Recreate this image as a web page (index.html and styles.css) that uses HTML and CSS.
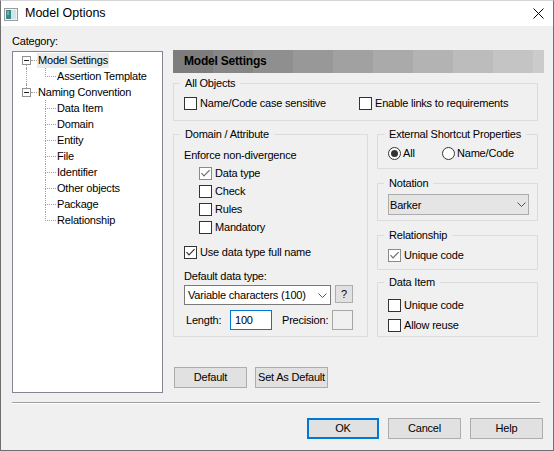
FILE: index.html
```html
<!DOCTYPE html>
<html>
<head>
<meta charset="utf-8">
<title>Model Options</title>
<link rel="stylesheet" href="styles.css">
</head>
<body>
<div class="window">
  <div class="titlebar">
    <svg class="app-icon" width="14" height="13" viewBox="0 0 14 13">
      <rect x="0.5" y="0.5" width="13" height="12" fill="#f2f2f2" stroke="#9c9c9c"/>
      <rect x="2" y="2" width="5" height="9" fill="#3f8585"/>
      <rect x="3" y="3" width="2" height="4" fill="#6fb0a8"/>
      <rect x="7" y="2" width="5" height="9" fill="#cfe3ea"/>
    </svg>
    <span class="title">Model Options</span>
    <svg class="close" width="11" height="11" viewBox="0 0 11 11">
      <path d="M0.5 0.5 L10.5 10.5 M10.5 0.5 L0.5 10.5" stroke="#000" stroke-width="1" fill="none"/>
    </svg>
  </div>

  <div class="client">
    <div class="main">
      <div class="left">
        <div class="cat-label">Category:</div>
        <div class="tree">
          <div class="trow">
            <div class="gutter">
              <div class="exp-col">
                <div class="stub top"></div>
                <div class="exp"><i></i></div>
                <div class="stub bot line"></div>
              </div>
              <div class="hdots"></div>
            </div>
            <span class="tlabel sel">Model Settings</span>
          </div>
          <div class="trow">
            <div class="gutter"><div class="vline"></div></div>
            <div class="branch"><div class="b-top"></div><div class="b-bot"></div></div>
            <span class="tlabel">Assertion Template</span>
          </div>
          <div class="trow">
            <div class="gutter">
              <div class="exp-col">
                <div class="stub top line"></div>
                <div class="exp"><i></i></div>
                <div class="stub bot"></div>
              </div>
              <div class="hdots"></div>
            </div>
            <span class="tlabel">Naming Convention</span>
          </div>
          <div class="trow">
            <div class="gutter"></div>
            <div class="branch"><div class="b-top"></div><div class="b-bot line"></div></div>
            <span class="tlabel">Data Item</span>
          </div>
          <div class="trow">
            <div class="gutter"></div>
            <div class="branch"><div class="b-top"></div><div class="b-bot line"></div></div>
            <span class="tlabel">Domain</span>
          </div>
          <div class="trow">
            <div class="gutter"></div>
            <div class="branch"><div class="b-top"></div><div class="b-bot line"></div></div>
            <span class="tlabel">Entity</span>
          </div>
          <div class="trow">
            <div class="gutter"></div>
            <div class="branch"><div class="b-top"></div><div class="b-bot line"></div></div>
            <span class="tlabel">File</span>
          </div>
          <div class="trow">
            <div class="gutter"></div>
            <div class="branch"><div class="b-top"></div><div class="b-bot line"></div></div>
            <span class="tlabel">Identifier</span>
          </div>
          <div class="trow">
            <div class="gutter"></div>
            <div class="branch"><div class="b-top"></div><div class="b-bot line"></div></div>
            <span class="tlabel">Other objects</span>
          </div>
          <div class="trow">
            <div class="gutter"></div>
            <div class="branch"><div class="b-top"></div><div class="b-bot line"></div></div>
            <span class="tlabel">Package</span>
          </div>
          <div class="trow">
            <div class="gutter"></div>
            <div class="branch"><div class="b-top"></div><div class="b-bot"></div></div>
            <span class="tlabel">Relationship</span>
          </div>
        </div>
      </div>

      <div class="right">
        <div class="page-header">Model Settings</div>

        <div class="group g-all">
          <div class="legend">All Objects</div>
          <div class="inline-row">
            <div class="check w175"><span class="box"></span><span>Name/Code case sensitive</span></div>
            <div class="check"><span class="box"></span><span>Enable links to requirements</span></div>
          </div>
        </div>

        <div class="cols">
          <div class="group g-domain">
            <div class="legend">Domain / Attribute</div>
            <div class="plain enforce">Enforce non-divergence</div>
            <div class="check sub first">
              <span class="box dim"><svg width="11" height="11" viewBox="0 0 11 11"><path d="M1.5 5.2 L4 7.8 L9.6 2.2" fill="none" stroke="#6e6e6e" stroke-width="1.2"/></svg></span><span>Data type</span>
            </div>
            <div class="check sub"><span class="box"></span><span>Check</span></div>
            <div class="check sub"><span class="box"></span><span>Rules</span></div>
            <div class="check sub"><span class="box"></span><span>Mandatory</span></div>
            <div class="check fullname">
              <span class="box"><svg width="11" height="11" viewBox="0 0 11 11"><path d="M1.5 5.2 L4 7.8 L9.6 2.2" fill="none" stroke="#333" stroke-width="1.2"/></svg></span><span>Use data type full name</span>
            </div>
            <div class="plain ddt">Default data type:</div>
            <div class="combo-row">
              <div class="combo">
                <span>Variable characters (100)</span>
                <svg width="9" height="5" viewBox="0 0 9 5"><path d="M0.5 0.5 L4.5 4.5 L8.5 0.5" fill="none" stroke="#555" stroke-width="1"/></svg>
              </div>
              <div class="qbtn">?</div>
            </div>
            <div class="len-row">
              <span class="lbl len">Length:</span>
              <div class="edit focus">100</div>
              <span class="lbl prec">Precision:</span>
              <div class="edit dis"></div>
            </div>
          </div>

          <div class="stack">
            <div class="group g-ext">
              <div class="legend">External Shortcut Properties</div>
              <div class="inline-row radios">
                <div class="radio w54"><span class="circle on"><i></i></span><span>All</span></div>
                <div class="radio"><span class="circle"></span><span>Name/Code</span></div>
              </div>
            </div>
            <div class="group g-notation">
              <div class="legend">Notation</div>
              <div class="combo ro">
                <span>Barker</span>
                <svg width="9" height="5" viewBox="0 0 9 5"><path d="M0.5 0.5 L4.5 4.5 L8.5 0.5" fill="none" stroke="#555" stroke-width="1"/></svg>
              </div>
            </div>
            <div class="group g-rel">
              <div class="legend">Relationship</div>
              <div class="check inner r1">
                <span class="box dim"><svg width="11" height="11" viewBox="0 0 11 11"><path d="M1.5 5.2 L4 7.8 L9.6 2.2" fill="none" stroke="#6e6e6e" stroke-width="1.2"/></svg></span><span>Unique code</span>
              </div>
            </div>
            <div class="group g-di">
              <div class="legend">Data Item</div>
              <div class="check inner d1"><span class="box"></span><span>Unique code</span></div>
              <div class="check inner d2"><span class="box"></span><span>Allow reuse</span></div>
            </div>
          </div>
        </div>

        <div class="actions">
          <button class="btn">Default</button>
          <button class="btn">Set As Default</button>
        </div>
      </div>
    </div>

    <div class="separator"></div>

    <div class="footer">
      <button class="btn primary">OK</button>
      <button class="btn">Cancel</button>
      <button class="btn">Help</button>
    </div>
  </div>
</div>
</body>
</html>
```

FILE: styles.css
```css
* { box-sizing: border-box; }
html, body { margin: 0; padding: 0; }
body {
  font-family: "Liberation Sans", Arial, sans-serif;
  font-size: 11px;
  letter-spacing: -0.2px;
  color: #000;
  background: #f0f0f0;
}

.window {
  width: 554px;
  height: 451px;
  border: 1px solid #707070;
  border-top-color: #d4d4d4;
  background: #f0f0f0;
  display: flex;
  flex-direction: column;
  overflow: hidden;
}

/* title bar */
.titlebar {
  height: 25px;
  flex-shrink: 0;
  background: #fff;
  display: flex;
  align-items: center;
}
.app-icon { margin-left: 3px; margin-top: 1px; flex-shrink: 0; }
.title { margin-left: 7px; font-size: 12.5px; line-height: 25px; letter-spacing: 0; }
.close { margin-left: auto; margin-right: 9px; }

/* client area */
.client {
  flex: 1;
  padding-top: 9px;
  display: flex;
  flex-direction: column;
}
.main {
  display: flex;
  align-items: flex-start;
  padding-left: 11px;
}
.left { width: 151px; flex-shrink: 0; }
.cat-label { height: 13px; line-height: 13px; }

/* tree */
.tree {
  margin-top: 3px;
  height: 342px;
  border: 1px solid #828790;
  background: #fff;
}
.trow { display: flex; height: 16px; }
.gutter { width: 24px; flex-shrink: 0; display: flex; }
.exp-col { margin-left: 9px; width: 9px; display: flex; flex-direction: column; }
.stub { margin-left: 4px; }
.stub.top { height: 4px; }
.stub.bot { height: 3px; }
.line { border-left: 1px dotted #a0a0a0; }
.exp {
  width: 9px;
  height: 9px;
  border: 1px solid #919191;
  background: #fff;
  padding-top: 3px;
}
.exp i { display: block; width: 5px; height: 1px; margin-left: 1px; background: #1e1e1e; }
.hdots { width: 6px; height: 9px; border-bottom: 1px dotted #a0a0a0; }
.vline { margin-left: 13px; height: 16px; border-left: 1px dotted #a0a0a0; }
.branch { width: 19px; flex-shrink: 0; display: flex; flex-direction: column; }
.b-top {
  margin-left: 8px;
  width: 11px;
  height: 9px;
  border-left: 1px dotted #a0a0a0;
  border-bottom: 1px dotted #a0a0a0;
}
.b-bot { margin-left: 8px; height: 7px; }
.tlabel { padding: 0 1px; line-height: 16px; white-space: nowrap; }
.tlabel.sel { background: linear-gradient(transparent 1px, #ebebeb 1px); }

/* right panel */
.right { width: 371px; margin-left: 10px; padding-top: 15px; }
.page-header {
  height: 23px;
  line-height: 23px;
  padding-left: 11px;
  font-size: 12px;
  font-weight: bold;
  background: linear-gradient(to right,
    #7d7d7d 0 40px, #868686 40px 80px, #8f8f8f 80px 120px,
    #989898 120px 160px, #a1a1a1 160px 200px, #aaaaaa 200px 240px,
    #b3b3b3 240px 280px, #bcbcbc 280px 320px, #c4c4c4 320px 360px,
    #cbcbcb 360px);
}

.group {
  border: 1px solid #dcdcdc;
  display: flex;
  flex-direction: column;
  align-items: flex-start;
}
.legend {
  margin: -7px 0 0 6px;
  padding: 0 5px;
  height: 13px;
  line-height: 13px;
  background: #f0f0f0;
  white-space: nowrap;
}

.g-all { width: 365px; height: 38px; margin-top: 10px; }
.inline-row { display: flex; margin: 7px 0 0 10px; }
.w175 { width: 175px; }

.check { display: flex; align-items: center; height: 13px; line-height: 13px; white-space: nowrap; }
.box {
  width: 13px;
  height: 13px;
  flex-shrink: 0;
  border: 1px solid #333;
  background: #fff;
  margin-right: 3px;
  display: flex;
}
.box.dim { border-color: #8a8a8a; }

.cols { display: flex; gap: 9px; margin-top: 13px; }

.g-domain { width: 195px; height: 203px; }
.plain { height: 13px; line-height: 13px; margin-left: 10px; white-space: nowrap; }
.enforce { margin-top: 8px; }
.check.sub { margin: 5px 0 0 25px; }
.check.fullname { margin: 12px 0 0 10px; }
.ddt { margin-top: 11px; }

.combo-row { display: flex; align-items: flex-start; margin: 2px 0 0 10px; }
.combo {
  width: 147px;
  height: 20px;
  border: 1px solid #7a7a7a;
  background: #fff;
  display: flex;
  align-items: center;
  justify-content: space-between;
  padding: 0 3px 0 3px;
  white-space: nowrap;
}
.qbtn {
  width: 18px;
  height: 18px;
  margin-left: 4px;
  border: 1px solid #adadad;
  background: #e1e1e1;
  text-align: center;
  line-height: 16px;
}

.len-row { display: flex; align-items: center; height: 20px; margin: 5px 0 0 10px; }
.lbl { white-space: nowrap; }
.lbl.len { width: 46px; padding-left: 2px; }
.lbl.prec { width: 50px; margin-left: 10px; }
.edit {
  height: 20px;
  border: 1px solid #7a7a7a;
  background: #fff;
  line-height: 18px;
  padding-left: 4px;
}
.edit.focus { width: 42px; border-color: #0078d7; }
.edit.dis { width: 21px; border-color: #a6a6a6; background: #f0f0f0; }

/* right stack */
.stack { width: 161px; display: flex; flex-direction: column; }
.g-ext { height: 35px; }
.radios { margin-top: 6px; }
.radio { display: flex; align-items: center; height: 13px; line-height: 13px; white-space: nowrap; }
.w54 { width: 54px; }
.circle {
  width: 13px;
  height: 13px;
  border: 1px solid #333;
  border-radius: 50%;
  background: #fff;
  margin-right: 2px;
  padding: 2px;
  flex-shrink: 0;
}
.circle.on i { display: block; width: 7px; height: 7px; border-radius: 50%; background: #333; }

.g-notation { height: 38px; margin-top: 14px; }
.combo.ro {
  width: 141px;
  height: 21px;
  margin: 4px 0 0 10px;
  background: #e5e5e5;
  border-color: #acacac;
  padding: 0 2px 0 1px;
}

.g-rel { height: 35px; margin-top: 14px; }
.g-di { height: 55px; margin-top: 12px; }
.check.inner { margin-left: 10px; }
.r1 { margin-top: 7px; }
.d1 { margin-top: 10px; }
.d2 { margin-top: 7px; }

/* buttons */
.btn {
  width: 73px;
  height: 21px;
  padding: 0;
  border: 1px solid #adadad;
  background: #e1e1e1;
  font-family: inherit;
  font-size: 11px;
  letter-spacing: -0.2px;
  color: #000;
  line-height: 19px;
  text-align: center;
  white-space: nowrap;
}
.btn.primary { width: 72px; border: 2px solid #0078d7; line-height: 17px; }

.actions { display: flex; gap: 8px; margin: 30px 0 0 1px; }

.separator {
  margin: 9px 0 0 11px;
  width: 528px;
  height: 2px;
  border-top: 1px solid #a0a0a0;
  border-bottom: 1px solid #fff;
}

.footer {
  display: flex;
  justify-content: flex-end;
  gap: 9px;
  margin-top: 14px;
  padding-right: 10px;
}
```
